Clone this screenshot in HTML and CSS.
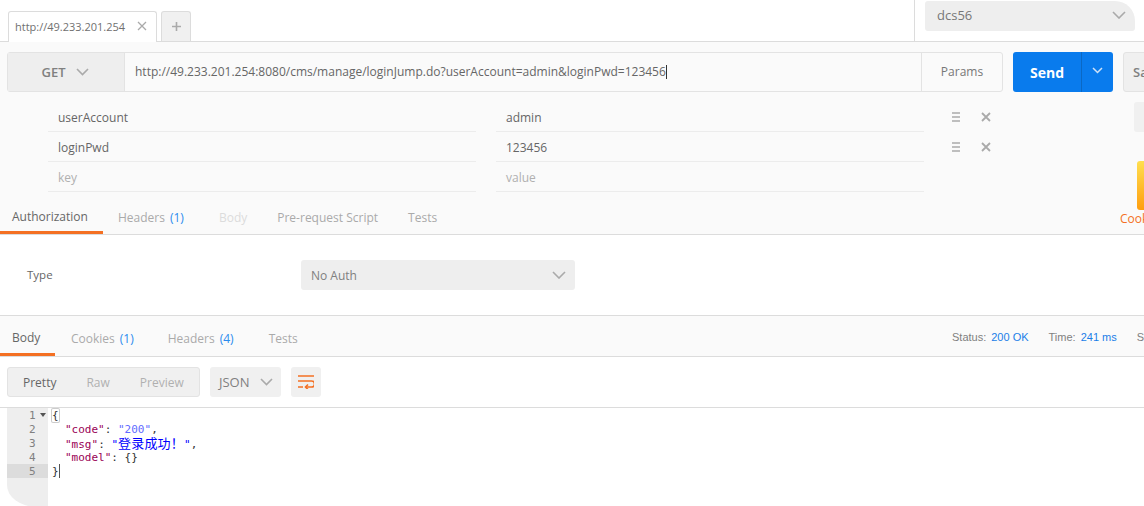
FILE: index.html
```html
<!DOCTYPE html>
<html lang="en">
<head>
<meta charset="utf-8">
<title>Postman</title>
<link rel="stylesheet" href="styles.css">
</head>
<body>
<div class="app">
  <header class="topbar">
    <div class="tabs">
      <div class="tab"><span class="tab-title">http://49.233.201.254</span>
        <svg class="tab-x" width="10" height="10" viewBox="0 0 10 10"><path d="M1 1l8 8M9 1l-8 8"/></svg>
      </div>
      <div class="tab-add"><svg width="9" height="9" viewBox="0 0 9 9"><path d="M4.500 0v9M0 4.500h9"/></svg></div>
    </div>
    <div class="env">
      <div class="env-select"><span>dcs56</span>
        <svg class="chev" width="14" height="8" viewBox="0 0 14 8"><path d="M1 1l6 6 6-6"/></svg>
      </div>
    </div>
  </header>

  <section class="request">
    <div class="urlbar">
      <div class="urlgroup">
        <div class="method"><span>GET</span>
          <svg class="chev" width="13" height="8" viewBox="0 0 13 8"><path d="M1 1l5.500 5.500L12 1"/></svg>
        </div>
        <div class="url">http://49.233.201.254:8080/cms/manage/loginJump.do?userAccount=admin&amp;loginPwd=123456<i class="caret"></i></div>
        <div class="params-btn">Params</div>
      </div>
      <div class="send">
        <span class="send-label">Send</span>
        <span class="send-drop"><svg width="11" height="7" viewBox="0 0 11 7"><path d="M1 1l4.500 4.500L10 1"/></svg></span>
      </div>
      <div class="save">Save</div>
    </div>

    <div class="param-area">
      <div class="param-rows">
        <div class="param-row">
          <div class="cell">userAccount</div><div class="cell">admin</div>
          <svg class="ico-menu" width="8" height="10" viewBox="0 0 8 10"><path d="M0 1h8M0 5h8M0 9h8"/></svg>
          <svg class="ico-x" width="10" height="10" viewBox="0 0 10 10"><path d="M1 1l8 8M9 1l-8 8"/></svg>
        </div>
        <div class="param-row">
          <div class="cell">loginPwd</div><div class="cell">123456</div>
          <svg class="ico-menu" width="8" height="10" viewBox="0 0 8 10"><path d="M0 1h8M0 5h8M0 9h8"/></svg>
          <svg class="ico-x" width="10" height="10" viewBox="0 0 10 10"><path d="M1 1l8 8M9 1l-8 8"/></svg>
        </div>
        <div class="param-row">
          <div class="cell ghost">key</div><div class="cell ghost">value</div>
        </div>
      </div>
      <aside class="side">
        <div class="side-block"></div>
        <div class="side-bar"></div>
        <div class="side-label">Cookies</div>
      </aside>
    </div>

    <nav class="subtabs req-tabs">
      <span class="subtab active auth">Authorization</span>
      <span class="subtab hdr">Headers <b>(1)</b></span>
      <span class="subtab dim bodyt">Body</span>
      <span class="subtab pre">Pre-request Script</span>
      <span class="subtab">Tests</span>
    </nav>
  </section>

  <section class="auth-pane">
    <span class="type-label">Type</span>
    <div class="auth-select"><span>No Auth</span>
      <svg class="chev" width="14" height="8" viewBox="0 0 14 8"><path d="M1 1l6 6 6-6"/></svg>
    </div>
  </section>

  <section class="response">
    <nav class="subtabs res-tabs">
      <span class="subtab active rbody">Body</span>
      <span class="subtab rcook">Cookies <b>(1)</b></span>
      <span class="subtab rhdr">Headers <b>(4)</b></span>
      <span class="subtab">Tests</span>
      <div class="stats">
        <span>Status:</span><em>200 OK</em>
        <span class="st2">Time:</span><em>241 ms</em>
        <span class="st3">Size:</span>
      </div>
    </nav>
    <div class="toolbar">
      <div class="views">
        <span class="view on">Pretty</span><span class="view">Raw</span><span class="view">Preview</span>
      </div>
      <div class="fmt"><span>JSON</span>
        <svg class="chev" width="13" height="8" viewBox="0 0 13 8"><path d="M1 1l5.500 5.500L12 1"/></svg>
      </div>
      <div class="wrap">
        <svg width="16" height="14" viewBox="0 0 16 14"><path d="M0 1h16M0 6h13.500a2.700 2.700 0 0 1 0 6H8M0 12h5"/><path d="M10 9.500L7.500 12l2.500 2.500"/></svg>
      </div>
    </div>
    <div class="editor">
      <div class="gutter">
        <div class="ln">1<i class="fold"></i></div>
        <div class="ln">2</div>
        <div class="ln">3</div>
        <div class="ln">4</div>
        <div class="ln cur">5</div>
      </div>
      <div class="code">
        <div class="cl"><span class="brace">{</span></div>
        <div class="cl in"><span class="k">"code"</span>: <span class="s">"200"</span>,</div>
        <div class="cl in"><span class="k">"msg"</span>: <span class="s2">"<span class="cjk">登录成功！</span>"</span>,</div>
        <div class="cl in"><span class="k">"model"</span>: {}</div>
        <div class="cl"><span>}</span><i class="cursor"></i></div>
      </div>
    </div>
  </section>
</div>
</body>
</html>
```
FILE: styles.css
```css
* { box-sizing: border-box; }
html, body { margin: 0; padding: 0; background: #fff; }
body { font-family: "Open Sans", "Noto Sans", sans-serif; font-size: 12px; color: #666; }
.app { width: 1144px; height: 506px; overflow: hidden; }
svg { display: block; fill: none; flex: none; }
.chev path { stroke: #aaa; stroke-width: 1.6; }

.topbar { height: 42px; display: flex; justify-content: space-between; border-bottom: 1px solid #dcdcdc; }
.tabs { display: flex; align-items: flex-end; padding-left: 8px; gap: 4px; }
.tab { width: 149px; height: 31px; margin-bottom: -1px; background: #fff; border: 1px solid #dcdcdc; border-bottom: 0; border-radius: 3px 3px 0 0; display: flex; align-items: center; padding: 0 0 2px 6px; font-size: 11px; color: #707070; position: relative; }
.tab-title { width: 122px; white-space: nowrap; }
.tab-x path { stroke: #aaa; stroke-width: 1.3; }
.tab-add { width: 30px; height: 30px; background: #f0f0f0; border: 1px solid #dcdcdc; border-bottom: 0; border-radius: 3px 3px 0 0; display: flex; align-items: center; justify-content: center; }
.tab-add path { stroke: #aaa; stroke-width: 1.6; }
.env { width: 230px; border-left: 1px solid #dcdcdc; padding: 1px 9px 0 10px; }
.env-select { width: 210px; height: 30px; background: #eee; border-radius: 3px 20px 3px 3px; display: flex; align-items: center; justify-content: space-between; padding: 0 9px 2px 12px; font-size: 13px; color: #777; }

.request { height: 193px; background: #fafafa; border-bottom: 1px solid #dcdcdc; display: flex; flex-direction: column; }
.urlbar { display: flex; padding: 10px 0 0 7px; height: 50px; flex: none; }
.urlgroup { width: 996px; height: 40px; flex: none; display: flex; border: 1px solid #e3e3e3; border-radius: 3px; }
.method { width: 117px; flex: none; background: #eee; border-right: 1px solid #e3e3e3; display: flex; align-items: center; justify-content: center; gap: 10px; font-size: 13px; font-weight: 600; color: #808080; padding-right: 2px; }
.url { width: 797px; flex: none; background: #fafafa; border-right: 1px solid #e3e3e3; display: flex; align-items: center; padding-left: 10px; font-size: 12px; color: #666; white-space: nowrap; padding-bottom: 1px; }
.caret { display: inline-block; width: 1px; height: 14px; background: #333; }
.params-btn { flex: 1; display: flex; align-items: center; justify-content: center; color: #777; padding-bottom: 1px; }
.send { width: 100px; height: 40px; flex: none; margin-left: 10px; background: #097bed; border-radius: 3px; display: flex; color: #fff; }
.send-label { width: 69px; display: flex; align-items: center; justify-content: center; font-size: 14px; font-weight: 700; border-right: 1px solid #0a68c4; }
.send-drop { flex: 1; display: flex; align-items: center; justify-content: center; padding-bottom: 3px; }
.send-drop path { stroke: #cfe2f7; stroke-width: 1.500; }
.save { width: 60px; height: 40px; margin-left: 10px; flex: none; background: #f0f0f0; border: 1px solid #e3e3e3; border-radius: 3px; display: flex; align-items: center; padding-left: 9px; font-size: 13px; font-weight: 600; color: #808080; }

.param-area { display: flex; height: 100px; padding-top: 10px; flex: none; }
.param-rows { width: 1000px; flex: none; padding-left: 48px; }
.param-row { height: 30px; display: flex; align-items: center; }
.cell { width: 428px; flex: none; height: 30px; margin-right: 20px; border-bottom: 1px solid #ececec; padding: 1px 0 0 10px; display: flex; align-items: center; color: #666; }
.ghost { color: #b0b0b0; }
.ico-menu { margin-left: 8px; }
.ico-menu path { stroke: #aaa; stroke-width: 1.6; }
.ico-x { margin-left: 21px; }
.ico-x path { stroke: #aaa; stroke-width: 1.8; }
.side { flex: none; width: 144px; padding-left: 120px; }
.side-block { width: 20px; height: 30px; margin: 0 0 29px 14px; background: #f0f0f0; border-radius: 3px; }
.side-bar { width: 20px; height: 49px; margin-left: 17px; border-radius: 3px; background: linear-gradient(#ffdf4f, #ff9e0f); }
.side-label { color: #f47023; white-space: nowrap; }

.subtabs { display: flex; align-items: center; }
.req-tabs { height: 42px; flex: none; }
.subtab { height: 100%; display: flex; align-items: center; gap: 5px; margin-right: 29px; color: #aaa; padding-top: 8px; white-space: nowrap; }
.subtab b { font-weight: 400; color: #2a8bee; }
.subtab.active { color: #666; border-bottom: 3px solid #f47023; padding: 9px 0 0 12px; margin-right: 15px; }
.auth { width: 103px; }
.hdr { margin-right: 35px; }
.bodyt { margin-right: 30px; }
.pre { margin-right: 30px; }
.dim { color: #dcdcdc; }

.auth-pane { height: 81px; border-bottom: 1px solid #dcdcdc; display: flex; align-items: center; padding: 0 0 0 27px; }
.type-label { width: 274px; color: #666; padding-bottom: 2px; font-size: 11.5px; }
.auth-select { width: 274px; height: 30px; background: #eee; border-radius: 3px; display: flex; align-items: center; justify-content: space-between; padding: 0 9px 0 10px; color: #808080; }

.res-tabs { height: 41px; background: #fafafa; border-bottom: 1px solid #dcdcdc; }
.res-tabs .subtab { padding-top: 5px; }
.res-tabs .rbody { width: 55px; margin-right: 16px; padding: 5px 0 0 12px; }
.rcook { margin-right: 34px; }
.rhdr { margin-right: 35px; }
.stats { margin-left: auto; display: flex; align-items: center; font-family: "Liberation Sans", sans-serif; font-size: 11px; width: 192px; flex: none; padding-top: 1px; color: #808080; white-space: nowrap; overflow: hidden; }
.stats em { font-style: normal; color: #1b7ee8; margin-left: 5px; }
.st2 { margin-left: 20px; }
.st3 { margin-left: 20px; }

.toolbar { height: 51px; display: flex; gap: 10px; padding: 10px 0 0 7px; border-bottom: 1px solid #dcdcdc; align-items: flex-start; }
.views { width: 193px; height: 30px; background: #f0f0f0; border: 1px solid #e3e3e3; border-radius: 3px; display: flex; align-items: center; padding: 1px 0 0 15px; gap: 30px; color: #b0b0b0; }
.view.on { color: #666; }
.fmt { width: 71px; height: 30px; background: #f0f0f0; border-radius: 3px; display: flex; align-items: center; gap: 10px; padding-left: 9px; color: #808080; font-size: 13px; }
.wrap { width: 30px; height: 30px; background: #f0f0f0; border-radius: 3px; display: flex; align-items: center; justify-content: center; }
.wrap path { stroke: #f47023; stroke-width: 1.600; }

.editor { display: flex; height: 99px; padding-left: 7px; font-family: "DejaVu Sans Mono", "Liberation Mono", monospace; font-size: 11px; line-height: 14px; }
.gutter { width: 41px; background: #eee; border-bottom-left-radius: 30px 22px; color: #808080; }
.ln { height: 14px; padding: 1px 0 0 22px; line-height: 13px; position: relative; }
.ln.cur { background: #dcdcdc; }
.fold { position: absolute; left: 33px; top: 5px; width: 0; height: 0; border: 3px solid transparent; border-top: 4px solid #555; border-bottom: 0; }
.code { padding-left: 4px; color: #333; flex: 1; }
.cl { height: 14px; white-space: pre; line-height: 15px; }
.cl.in { padding-left: 13px; }
.k { color: #905; }
.s { color: #5f6bff; }
.s2 { color: #00f; }
.cjk { font-family: "Noto Sans CJK SC", sans-serif; font-size: 13px; letter-spacing: 0.2px; line-height: 14px; }
.brace { box-shadow: 0 0 0 1px #ccc; border-radius: 1px; }
.cursor { display: inline-block; width: 1px; height: 14px; background: #555; vertical-align: top; }
```
